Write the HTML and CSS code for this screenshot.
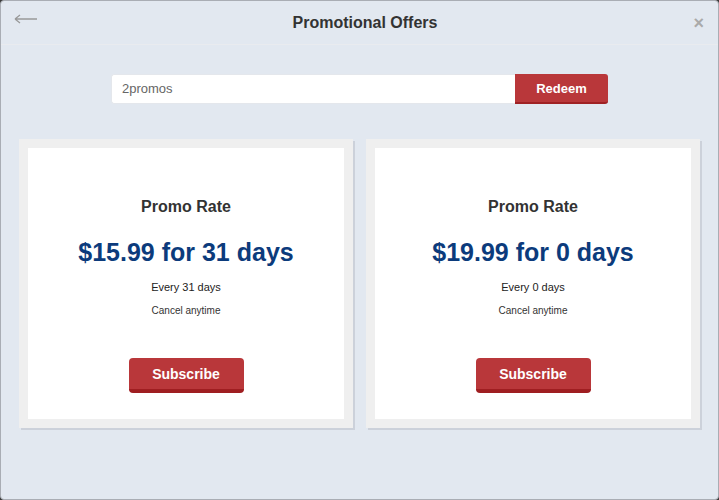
FILE: index.html
```html
<!DOCTYPE html>
<html>
<head>
<meta charset="utf-8">
<link rel="stylesheet" href="styles.css">
</head>
<body>
<div class="window">
  <div class="header">
    <span class="back">
      <svg width="24" height="10" viewBox="0 0 24 10"><path d="M1 5 H23 M1 5 L6 1 M1 5 L6 9" stroke="#999" stroke-width="1.3" fill="none"/></svg>
    </span>
    <div class="title">Promotional Offers</div>
    <span class="close">&#215;</span>
  </div>
  <div class="redeem">
    <div class="input">2promos</div>
    <div class="btn-redeem">Redeem</div>
  </div>
  <div class="cards">
    <div class="card">
      <div class="card-inner">
        <div class="card-title">Promo Rate</div>
        <div class="price">$15.99 for 31 days</div>
        <div class="every">Every 31 days</div>
        <div class="cancel">Cancel anytime</div>
        <div class="subscribe">Subscribe</div>
      </div>
    </div>
    <div class="card">
      <div class="card-inner">
        <div class="card-title">Promo Rate</div>
        <div class="price">$19.99 for 0 days</div>
        <div class="every">Every 0 days</div>
        <div class="cancel">Cancel anytime</div>
        <div class="subscribe">Subscribe</div>
      </div>
    </div>
  </div>
</div>
</body>
</html>
```
FILE: styles.css
```css
html, body {
  margin: 0;
  padding: 0;
  background: #3a3a3a;
}
body {
  font-family: "Liberation Sans", Arial, sans-serif;
}
.window {
  width: 719px;
  height: 500px;
  box-sizing: border-box;
  border: 1px solid #a9adb4;
  border-radius: 4px;
  background: #e2e8f0;
  overflow: hidden;
}
.header {
  height: 43px;
  border-bottom: 1px solid #e9ebef;
  display: flex;
  align-items: center;
  justify-content: space-between;
  padding: 0 14px 0 13px;
}
.back {
  width: 24px;
  height: 10px;
  display: flex;
  margin-top: -8px;
}
.title {
  font-size: 16px;
  font-weight: bold;
  color: #333;
  margin-left: 12px;
}
.close {
  font-size: 18px;
  font-weight: bold;
  color: #aaa;
  width: 24px;
  text-align: right;
  margin-top: 1px;
}
.redeem {
  display: flex;
  width: 497px;
  height: 30px;
  margin: 29px auto 0;
}
.input {
  flex: 1;
  background: #fff;
  border: 1px solid #e4e7ec;
  border-right: none;
  border-radius: 3px 0 0 3px;
  font-size: 13px;
  color: #666;
  line-height: 28px;
  padding-left: 10px;
}
.btn-redeem {
  width: 93px;
  box-sizing: border-box;
  background: #b9373a;
  border-bottom: 2px solid #9f2124;
  border-radius: 0 3px 3px 0;
  color: #fff;
  font-size: 13px;
  font-weight: bold;
  text-align: center;
  line-height: 29px;
}
.cards {
  display: flex;
  gap: 13px;
  padding: 0 18px;
  margin-top: 35px;
}
.card {
  flex: 1;
  height: 289px;
  box-sizing: border-box;
  padding: 9px;
  background: #efefef;
  box-shadow: 2px 2px 0 #ccd1da;
}
.card-inner {
  background: #fff;
  height: 100%;
  display: flex;
  flex-direction: column;
  align-items: center;
  padding-top: 48px;
  box-sizing: border-box;
}
.card-title {
  font-size: 16px;
  font-weight: bold;
  color: #333;
  line-height: 21px;
}
.price {
  font-size: 25px;
  font-weight: bold;
  color: #0c3b7c;
  line-height: 30px;
  margin-top: 20px;
}
.every {
  font-size: 11px;
  color: #222;
  line-height: 14px;
  margin-top: 13px;
}
.cancel {
  font-size: 10px;
  color: #333;
  line-height: 14px;
  margin-top: 10px;
}
.subscribe {
  margin-top: 40px;
  width: 115px;
  height: 35px;
  box-sizing: border-box;
  background: #b9373a;
  border-bottom: 4px solid #9f1e21;
  border-radius: 4px;
  color: #fff;
  font-size: 14px;
  font-weight: bold;
  text-align: center;
  line-height: 32px;
}
```
